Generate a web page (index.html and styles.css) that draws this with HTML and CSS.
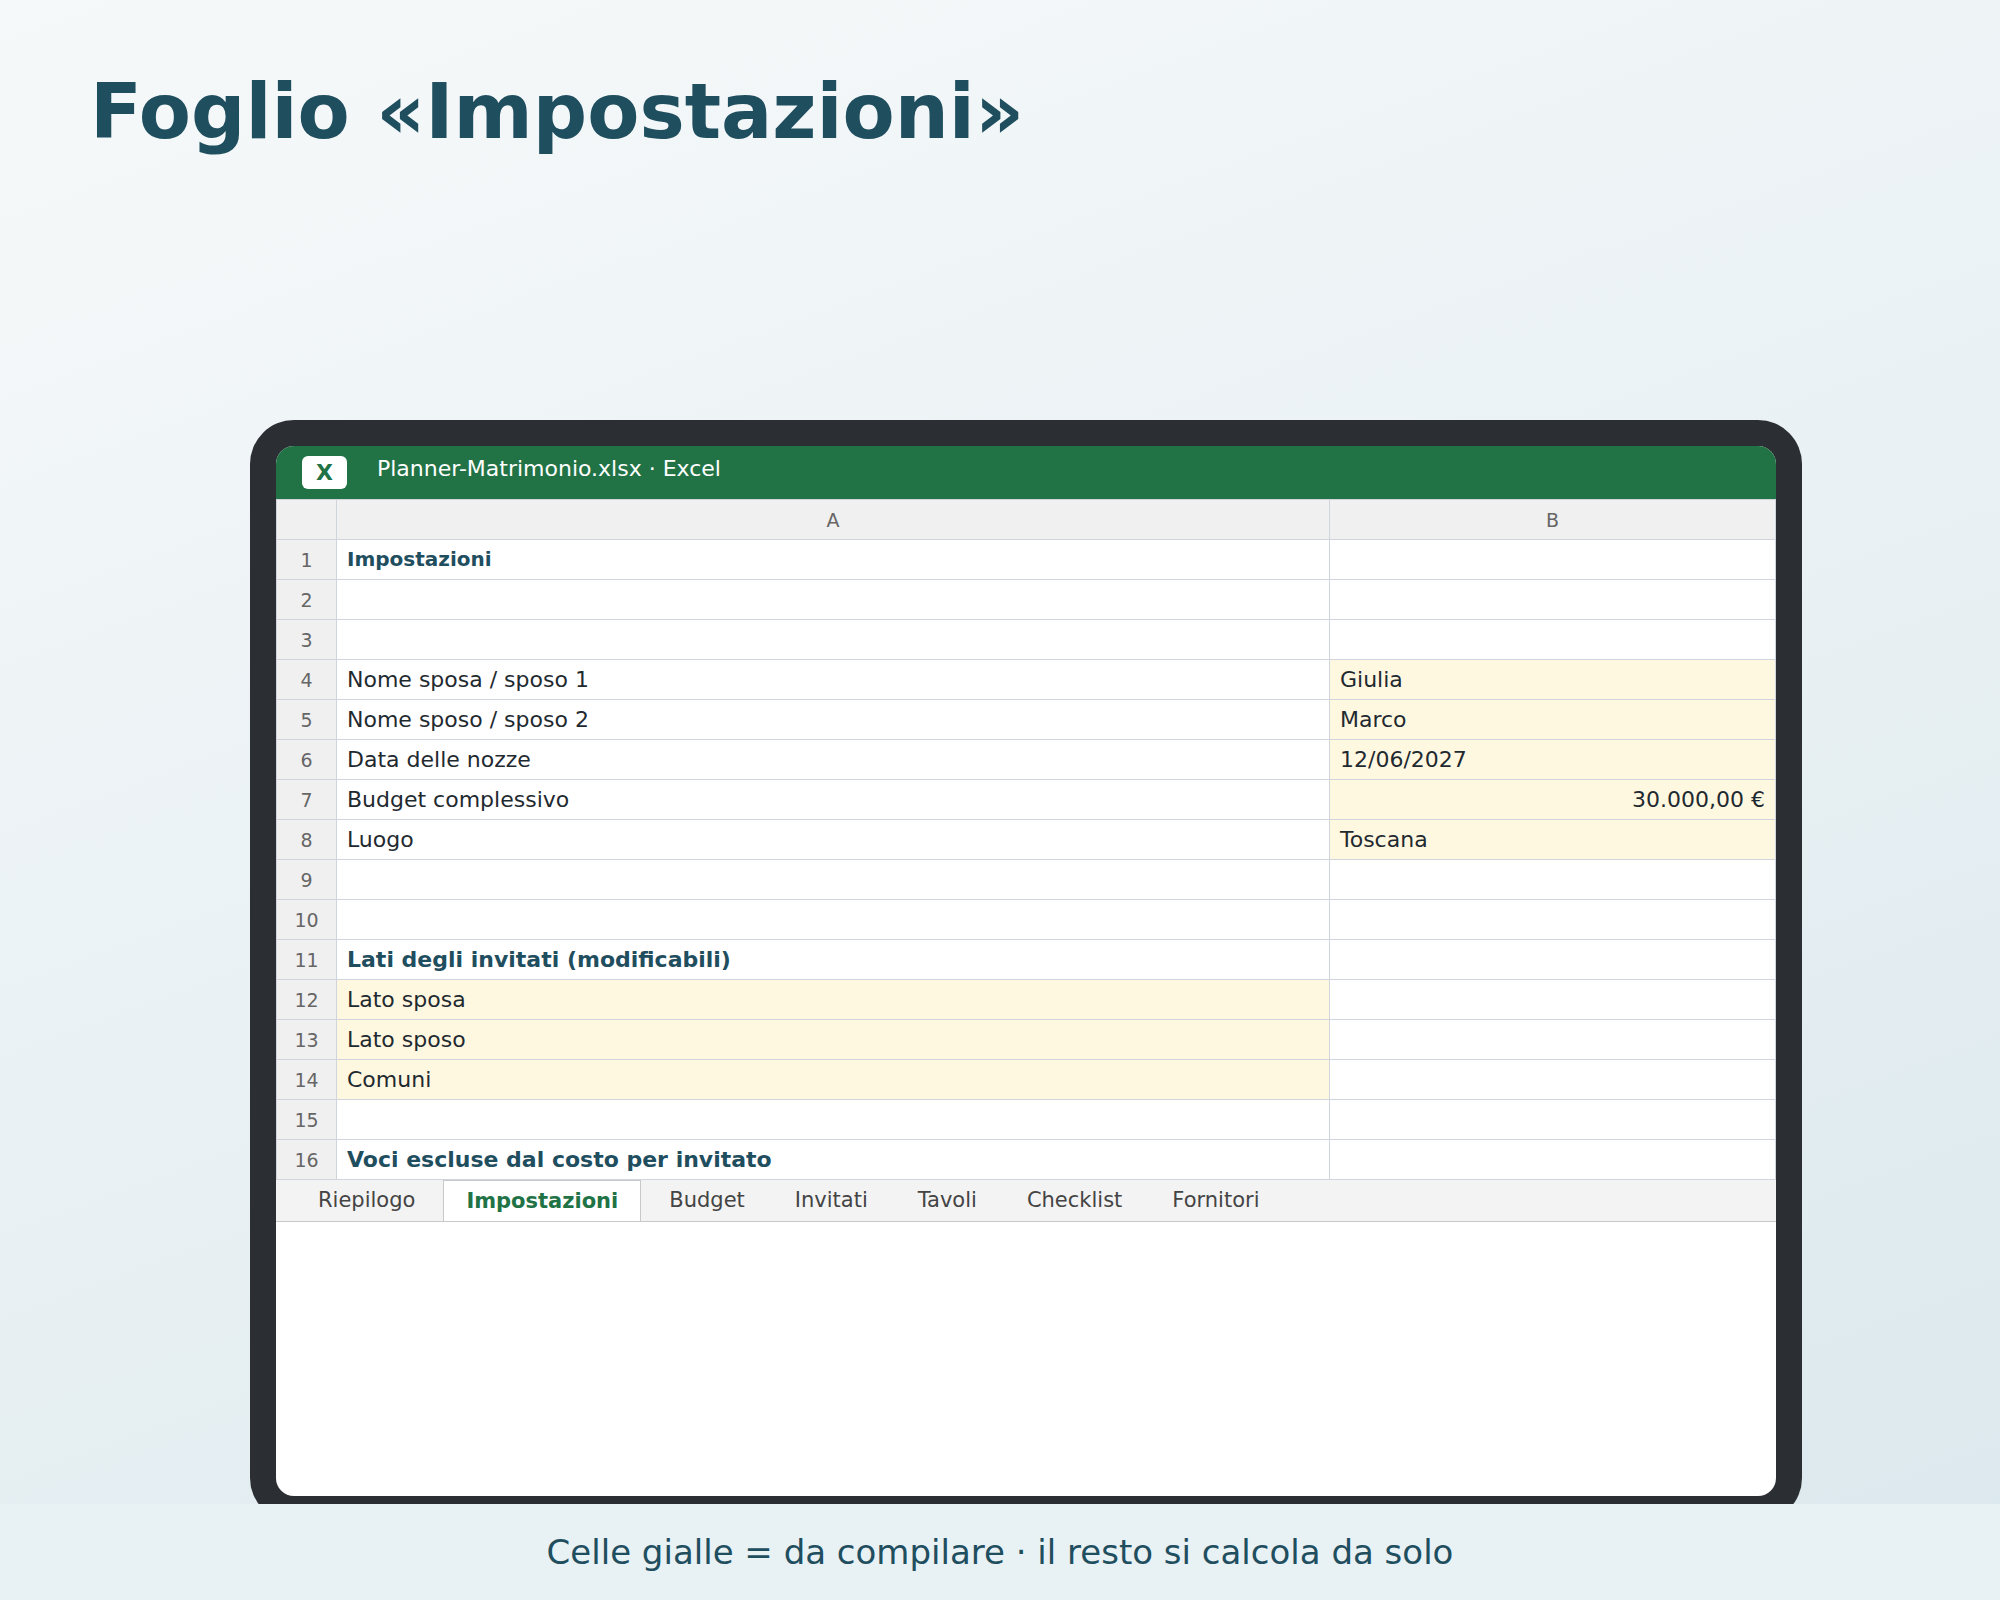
FILE: index.html
```html
<!DOCTYPE html>
<html lang="it">
<head>
<meta charset="utf-8">
<meta name="viewport" content="width=device-width, initial-scale=1">
<title>Foglio «Impostazioni»</title>
<link rel="stylesheet" href="styles.css">
</head>
<body>
<div class="page">
  <h1 class="title">Foglio «Impostazioni»</h1>
  <main class="device">
    <div class="screen">
      <header class="titlebar">
        <span class="badge">X</span>
        <span class="filename">Planner-Matrimonio.xlsx · Excel</span>
      </header>
      <table class="sheet">
        <colgroup><col class="col-num"><col><col class="col-b"></colgroup>
        <thead>
          <tr><td class="corner"></td><th scope="col">A</th><th scope="col">B</th></tr>
        </thead>
        <tbody>
          <tr><th scope="row">1</th><td class="heading">Impostazioni</td><td></td></tr>
          <tr><th scope="row">2</th><td></td><td></td></tr>
          <tr><th scope="row">3</th><td></td><td></td></tr>
          <tr><th scope="row">4</th><td>Nome sposa / sposo 1</td><td class="fill">Giulia</td></tr>
          <tr><th scope="row">5</th><td>Nome sposo / sposo 2</td><td class="fill">Marco</td></tr>
          <tr><th scope="row">6</th><td>Data delle nozze</td><td class="fill">12/06/2027</td></tr>
          <tr><th scope="row">7</th><td>Budget complessivo</td><td class="fill amount">30.000,00 €</td></tr>
          <tr><th scope="row">8</th><td>Luogo</td><td class="fill">Toscana</td></tr>
          <tr><th scope="row">9</th><td></td><td></td></tr>
          <tr><th scope="row">10</th><td></td><td></td></tr>
          <tr><th scope="row">11</th><td class="section">Lati degli invitati (modificabili)</td><td></td></tr>
          <tr><th scope="row">12</th><td class="fill">Lato sposa</td><td></td></tr>
          <tr><th scope="row">13</th><td class="fill">Lato sposo</td><td></td></tr>
          <tr><th scope="row">14</th><td class="fill">Comuni</td><td></td></tr>
          <tr><th scope="row">15</th><td></td><td></td></tr>
          <tr><th scope="row">16</th><td class="section">Voci escluse dal costo per invitato</td><td></td></tr>
        </tbody>
      </table>
      <nav class="tabs" aria-label="Fogli">
        <button class="tab" type="button">Riepilogo</button>
        <button class="tab active" type="button" aria-current="page">Impostazioni</button>
        <button class="tab" type="button">Budget</button>
        <button class="tab" type="button">Invitati</button>
        <button class="tab" type="button">Tavoli</button>
        <button class="tab" type="button">Checklist</button>
        <button class="tab" type="button">Fornitori</button>
      </nav>
    </div>
  </main>
  <footer class="caption">Celle gialle = da compilare · il resto si calcola da solo</footer>
</div>
</body>
</html>
```
FILE: styles.css
```css
* {
  box-sizing: border-box;
}

body {
  margin: 0;
  font-family: "DejaVu Sans", sans-serif;
  color: #1f2a30;
}

.page {
  display: flex;
  flex-direction: column;
  min-height: 100vh;
  background: linear-gradient(160deg, #f6f9fa 0%, #e8f0f3 55%, #dbe8ed 100%);
}

.title {
  margin: 0;
  padding: 67px 90px 263px;
  font-size: 76px;
  line-height: 90px;
  color: #1f4e5f;
}

.device {
  display: flex;
  flex: 1;
  margin: 0 198px 0 250px;
  padding: 26px;
  border-radius: 44px;
  background: #2b2e33;
}

.screen {
  flex: 1;
  min-width: 0;
  border-radius: 18px;
  background: #fff;
  overflow: hidden;
}

.titlebar {
  display: flex;
  align-items: flex-start;
  gap: 30px;
  padding: 10px 26px;
  background: #217346;
  color: #fff;
  font-size: 22px;
  line-height: 25px;
}

.badge {
  padding: 4px 14px;
  border-radius: 6px;
  background: #fff;
  color: #217346;
  font-weight: bold;
}

.sheet {
  width: 100%;
  table-layout: fixed;
  border-collapse: collapse;
  font-size: 22px;
  line-height: 26px;
}

.col-num {
  width: 60px;
}

.col-b {
  width: 446px;
}

.sheet th,
.sheet td {
  height: 40px;
  padding: 0 10px;
  border: 1px solid #d0d4dc;
  text-align: left;
}

.sheet th,
.sheet .corner {
  background: #f0f0f0;
  color: #666;
  font-size: 19px;
  font-weight: normal;
  text-align: center;
}

.sheet .heading {
  padding-bottom: 2px;
  color: #1f4e5f;
  font-size: 20px;
  font-weight: bold;
}

.sheet .section {
  color: #1f4e5f;
  font-weight: bold;
}

.sheet .fill {
  background: #fff8e1;
}

.sheet .amount {
  text-align: right;
}

.tabs {
  display: flex;
  align-items: flex-start;
  gap: 6px;
  padding: 0 20px;
  border-bottom: 1px solid #c8c8c8;
  background: #f3f3f3;
}

.tab {
  padding: 8px 22px;
  border: 0;
  background: none;
  color: #444;
  font: 21px/24px "DejaVu Sans", sans-serif;
}

.tab.active {
  border: 1px solid #c8c8c8;
  border-bottom: 0;
  background: #fff;
  color: #217346;
  font-weight: bold;
}

.caption {
  position: relative;
  margin-top: -18px;
  padding: 28px 24px;
  background: #e8f1f4;
  color: #1f4e5f;
  font-size: 34px;
  line-height: 40px;
  text-align: center;
}
```
